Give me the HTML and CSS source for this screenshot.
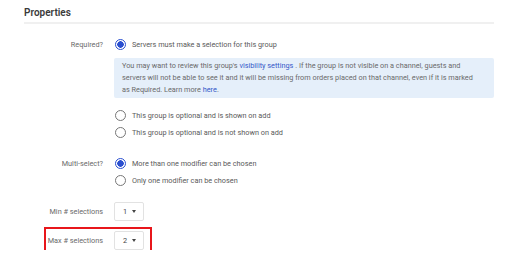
FILE: index.html
```html
<!DOCTYPE html>
<html lang="en">

<head>
  <meta charset="UTF-8">
  <title>Properties</title>
  <link rel="stylesheet" href="styles.css">
</head>

<body>
  <section class="panel">
    <h2 class="panel-title">Properties</h2>

    <div class="row">
      <span class="row-label">Required?</span>
      <div class="row-body">
        <label class="option"><span class="radio checked"></span>Servers must make a selection for this group</label>
        <p class="info">
          You may want to review this group's <a href="#">visibility settings</a> . If the group is not visible on a channel, guests and<br>
          servers will not be able to see it and it will be missing from orders placed on that channel, even if it is marked<br>
          as Required. Learn more <a href="#">here</a>.
        </p>
        <div class="options">
          <label class="option"><span class="radio"></span>This group is optional and is shown on add</label>
          <label class="option"><span class="radio"></span>This group is optional and is not shown on add</label>
        </div>
      </div>
    </div>

    <div class="row row-multi">
      <span class="row-label">Multi-select?</span>
      <div class="row-body">
        <label class="option"><span class="radio checked"></span>More than one modifier can be chosen</label>
        <label class="option"><span class="radio"></span>Only one modifier can be chosen</label>
      </div>
    </div>

    <div class="row row-min">
      <span class="row-label">Min # selections</span>
      <div class="row-body">
        <div class="select">1 <span class="caret"></span></div>
      </div>
    </div>

    <div class="row row-max">
      <span class="row-label">Max # selections</span>
      <div class="row-body">
        <div class="select">2 <span class="caret"></span></div>
      </div>
      <span class="highlight"></span>
    </div>
  </section>
</body>

</html>
```

FILE: styles.css
```css
html {
  box-sizing: border-box;
  font-family: Roboto, 'Liberation Sans', sans-serif;
  font-size: 7.3px;
}

*,
*:after,
*:before {
  box-sizing: inherit;
}

body {
  margin: 0;
  color: #6a6a6a;
  background-color: #fff;
}

a {
  color: #3558c8;
  text-decoration: none;
}

.panel {
  padding: 7px 18px 0 24px;
}

.panel-title {
  margin: 0;
  padding-bottom: 3px;
  border-bottom: 2px solid #f0f0f0;
  font-size: 10px;
  font-weight: 600;
  line-height: 12px;
  color: #3a3a3a;
}

.row {
  display: grid;
  grid-template-columns: 79px 1fr;
  column-gap: 11px;
  margin-top: 12px;
}

.row-label {
  text-align: right;
  line-height: 17px;
  color: #6a6a6a;
}

.option {
  display: flex;
  align-items: center;
  gap: 6px;
  height: 17px;
  color: #5a5a5a;
}

.radio {
  width: 11px;
  height: 11px;
  margin-left: 1px;
  border: 1px solid #777;
  border-radius: 50%;
  flex-shrink: 0;
}

.radio.checked {
  border-color: #2a4fd0;
  border-width: 1.5px;
  background: radial-gradient(circle, #2a4fd0 0 3px, #fff 3.5px);
}

.info {
  margin: 5px 0 0;
  padding: 2px 8px;
  height: 40px;
  line-height: 12px;
  white-space: nowrap;
  color: #6a6a6a;
  background-color: #e5effa;
  border-radius: 2px;
}

.options {
  margin-top: 9px;
}

.row-multi {
  margin-top: 14px;
}

.row-min {
  margin-top: 13px;
}

.row-max {
  position: relative;
  margin-top: 10px;
}

.row-min .row-label,
.row-max .row-label {
  line-height: 19px;
}

.select {
  display: flex;
  align-items: center;
  gap: 5px;
  width: 30px;
  height: 19px;
  padding-left: 8px;
  border: 1px solid #e2e2e2;
  border-radius: 2px;
  color: #444;
}

.caret {
  width: 0;
  height: 0;
  border-left: 2.5px solid transparent;
  border-right: 2.5px solid transparent;
  border-top: 3px solid #444;
}

.highlight {
  position: absolute;
  left: 20px;
  top: -4px;
  bottom: -3px;
  width: 108px;
  border: 2px solid #e8161b;
}
```
